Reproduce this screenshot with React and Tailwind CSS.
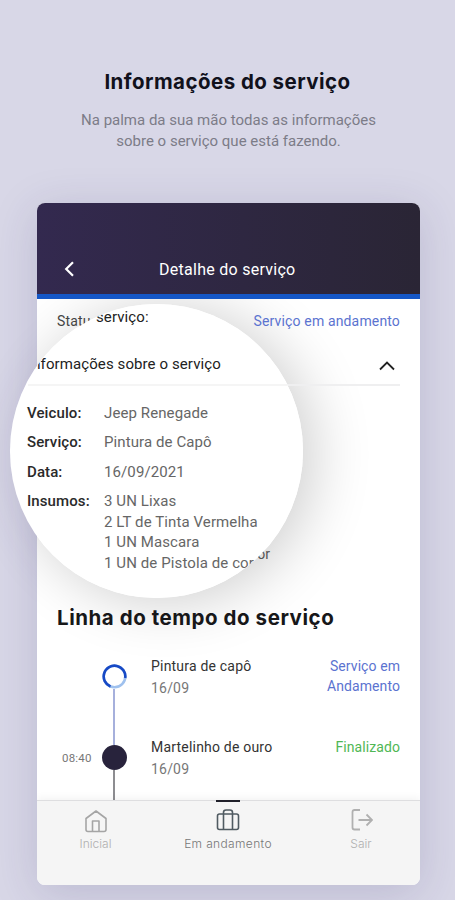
const details = [
  { label: "Veiculo:", values: ["Jeep Renegade"] },
  { label: "Serviço:", values: ["Pintura de Capô"] },
  { label: "Data:", values: ["16/09/2021"] },
  {
    label: "Insumos:",
    values: ["3 UN Lixas", "2 LT de Tinta Vermelha", "1 UN Mascara", "1 UN de Pistola de cor"],
  },
];

function Header() {
  return (
    <header className="h-24 shrink-0 flex items-end border-b-[5px] border-[#1557c6] bg-linear-to-r from-[#33294f] to-[#2a2535] pl-[23px] pb-[14px]">
      <button type="button" className="w-5 h-5 mb-px flex items-center justify-center text-white">
        <svg width="20" height="20" viewBox="0 0 20 20" fill="none" stroke="currentColor" strokeWidth="2.2">
          <path d="M13 3.2 6.2 10l6.8 6.8" />
        </svg>
      </button>
      <h2 className="ml-[79px] text-base leading-5 tracking-[0.27px] text-white whitespace-nowrap">
        Detalhe do serviço
      </h2>
    </header>
  );
}

function Magnifier() {
  return (
    <div className="absolute left-[10px] top-[304px] w-[293px] h-[294px] rounded-full overflow-hidden bg-white whitespace-nowrap text-[15px] tracking-[0.1px]">
      <p className="mt-[3px] ml-[86px] h-5 leading-5 text-[#222]">serviço:</p>
      <div className="mt-[27px] ml-[18px] pb-[10px] border-b-2 border-[#f5f5f5]">
        <p className="leading-5 text-[#222]">Informações sobre o serviço</p>
      </div>
      <dl className="mt-[17px] ml-[17px] flex flex-col gap-[8.3px]">
        {details.map((item) => (
          <div key={item.label} className="flex">
            <dt className="w-[77px] leading-[21px] font-medium text-[#2a2a2a]">{item.label}</dt>
            <dd className="text-[#666]">
              {item.values.map((value) => (
                <p key={value} className="leading-[20.7px]">{value}</p>
              ))}
            </dd>
          </div>
        ))}
      </dl>
    </div>
  );
}

function TimelineItem({ time, title, date, status, children, color }) {
  return (
    <div className="flex h-[81px] text-sm leading-5 tracking-[0.2px]">
      <div className="w-[45px] pt-[11px] pl-[5px] text-[11.5px] text-[#777]">{time}</div>
      <div className="w-[24px] pt-[8px] flex flex-col items-center">{children}</div>
      <div className="ml-[25px] flex-1 whitespace-nowrap">
        <p className="text-[#333]">{title}</p>
        <p className="mt-[2px] text-[#777]">{date}</p>
      </div>
      <p className={"w-20 text-right tracking-[0.08px] " + color}>{status}</p>
    </div>
  );
}

function BottomNav() {
  return (
    <nav className="relative h-[85px] shrink-0 border-t border-[#dedee0] bg-[#f5f5f5] flex font-['Inter',sans-serif] font-light text-[12px] leading-4 text-[#b0b0b0] shadow-[0_-2px_8px_rgba(0,0,0,0.05)]">
      <div className="w-[117px] pt-2 flex flex-col items-center">
        <svg width="24" height="24" viewBox="0 0 24 24" fill="none" stroke="#a5a5a5" strokeWidth="1.6" strokeLinejoin="round">
          <path d="M2 9.5 12 2l10 7.5V20.500a2 2 0 0 1-2 2H4a2 2 0 0 1-2-2zM8.500 22.500V12h6.500v10.500" />
        </svg>
        <span className="mt-[3px]">Inicial</span>
      </div>
      <div className="w-[148px] pt-[7px] flex flex-col items-center text-[#777]">
        <svg width="24" height="24" viewBox="0 0 24 24" fill="none" stroke="#505b62" strokeWidth="1.6">
          <rect x="1.5" y="6" width="21" height="15.5" rx="2" />
          <path d="M7.500 21.500V4.500q0-2.500 2.500-2.500h4q2.500 0 2.500 2.500v17" />
        </svg>
        <span className="mt-[4px] tracking-[0.35px]">Em andamento</span>
      </div>
      <div className="w-[118px] pt-[7px] flex flex-col items-center">
        <svg width="24" height="24" viewBox="0 0 24 24" fill="none" stroke="#b0b0b0" strokeWidth="1.8">
          <path d="M11 2H5.500Q3.500 2 3.500 4v15.500q0 2 2 2h5.500M9.500 12h14M17.500 6.500l5.500 5.500-5.500 5.500" />
        </svg>
        <span className="mt-[4px]">Sair</span>
      </div>
      <span className="absolute left-[179px] -top-px w-[24px] h-[2px] bg-[#20202a]" />
    </nav>
  );
}

export default function App() {
  return (
    <main className="relative w-[455px] h-[900px] overflow-hidden bg-[#d8d7e7] font-['Roboto',sans-serif]">
      <div className="h-[203px] pt-[68px] text-center">
        <h1 className="font-['Inter',sans-serif] text-[20.5px] leading-7 font-bold tracking-[0.45px] text-[#11111c]">
          Informações do serviço
        </h1>
        <p className="mt-[14px] pl-[2px] text-[15px] leading-[21px] text-[#7c7c88]">
          Na palma da sua mão todas as informações
          <br />
          sobre o serviço que está fazendo.
        </p>
      </div>

      {/* Sombra da lupa, atrás do cartão */}
      <div className="absolute left-[10px] top-[304px] w-[293px] h-[294px] rounded-full shadow-[0_10px_45px_rgba(50,40,90,0.12)]" />

      <section className="relative ml-[37px] w-[383px] h-[682px] flex flex-col rounded-lg shadow-[0_8px_45px_rgba(50,40,100,0.17)]">
        <div className="flex-1 min-h-0 flex flex-col rounded-lg overflow-hidden bg-white relative">
          <div className="absolute -left-[27px] top-[101px] w-[293px] h-[294px] rounded-full shadow-[10px_4px_60px_rgba(0,0,0,0.2)]" />
          <div className="relative">
            <Header />
          </div>
          <div className="relative flex-1 min-h-0 overflow-hidden px-5 text-sm">
            <div className="pt-[12px] flex justify-between leading-5 tracking-[0.15px]">
              <span className="text-[#444]">Statu</span>
              <span className="text-[#5b73d0]">Serviço em andamento</span>
            </div>
            <div className="mt-[17px] h-[38px] flex items-center justify-end pr-1 border-b-2 border-[#efeff0]">
              <svg width="18" height="18" viewBox="0 0 18 18" fill="none" stroke="#222" strokeWidth="1.8">
                <path d="M2 12.500 9 5.500l7 7" />
              </svg>
            </div>
            <p className="mt-[158px] w-[213px] text-right leading-5 text-[#555]">or</p>
            <h2 className="mt-[40px] font-['Inter',sans-serif] text-[20.5px] leading-7 font-bold tracking-[0.55px] text-[#171719] whitespace-nowrap">
              Linha do tempo do serviço
            </h2>
            <div className="mt-[24px]">
              <TimelineItem
                title="Pintura de capô"
                date="16/09"
                status="Serviço em Andamento"
                color="text-[#5b73d0]"
              >
                <svg className="shrink-0" width="25" height="25" viewBox="0 0 25 25" fill="none" strokeWidth="2.6">
                  <circle cx="12.5" cy="12.5" r="10.8" stroke="#9fc1ee" />
                  <path d="M8.500 22.500A10.800 10.800 0 1 1 23.200 14" stroke="#1749c5" />
                </svg>
                <span className="w-[2px] h-14 shrink-0 bg-[#a6b0dc]" />
              </TimelineItem>
              <TimelineItem
                time="08:40"
                title="Martelinho de ouro"
                date="16/09"
                status="Finalizado"
                color="text-[#50b755]"
              >
                <span className="w-[25px] h-[25px] shrink-0 rounded-full bg-[#28233c]" />
                <span className="w-[2px] h-12 shrink-0 bg-[#8d8d91]" />
              </TimelineItem>
            </div>
          </div>
          <BottomNav />
        </div>
      </section>
      <Magnifier />
    </main>
  );
}
